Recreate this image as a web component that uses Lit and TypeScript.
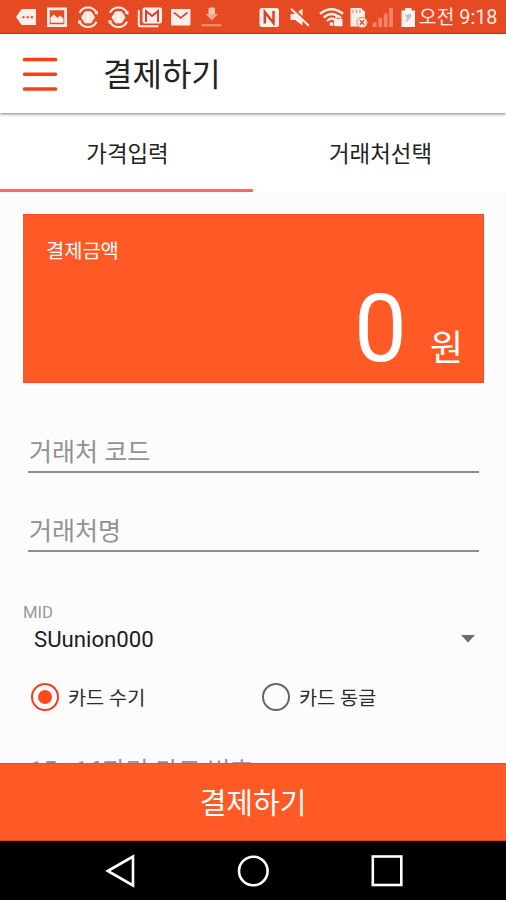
import { LitElement, html, css, svg } from "lit";
import { customElement, property, state } from "lit/decorators.js";
import { classMap } from "lit/directives/class-map.js";

@customElement("status-bar")
class StatusBar extends LitElement {
  static styles = css`
    :host {
      display: flex;
      height: 34px;
      box-sizing: border-box;
      background: #e64a22;
      border-bottom: 1px solid #dd2c12;
      color: #fdeee9;
    }
    .icons { display: block; flex: 0 0 419px; }
    .clock {
      display: flex;
      align-items: center;
      gap: 5px;
      height: 36px;
      font: 19px/36px Roboto, "Noto Sans CJK KR", sans-serif;
      white-space: nowrap;
    }
    .meridiem { font-size: 19.2px; line-height: 38px; }
    .time { font-size: 19.8px; }
  `;

  private sync(x: number) {
    return svg`
      <g transform="translate(${x} 17.3)" fill="none" stroke="#fdeee9">
        <path d="M-8.600 -4.500A9.700 9.700 0 0 1 8.600 -4.500" stroke-width="2"/>
        <path d="M8.600 4.500A9.700 9.700 0 0 1 -8.600 4.500" stroke-width="2"/>
        <path d="M10 -2.800L6 -3.600L9.800 -6.800ZM-10 2.800L-6 3.600L-9.800 6.800Z" fill="#fdeee9" stroke="none"/>
        <path d="M-3 -5.500H3L6.500 0L3 5.500H-3L-6.500 0Z" fill="#fdeee9" stroke="#fdeee9" stroke-width="1" stroke-linejoin="round"/>
        <path d="M-2.800 -4V4M2.800 -4V4" stroke="#f6cfc4" stroke-width=".7"/>
      </g>`;
  }

  render() {
    return html`
      <svg class="icons" width="419" height="33" viewBox="0 0 419 33">
        <path d="M16 17L21.5 9H36V25H21.5Z" fill="#fdeee9"/>
        <path d="M22.500 16.300h2v2h-2zM26.700 16.300h2v2h-2zM30.900 16.300h2v2h-2z" fill="#d93a2c"/>
        <path fill-rule="evenodd" d="M47 7.500H67V27H47ZM49.700 10.200V24.300H64.300V10.200Z" fill="#fdeee9"/>
        <path d="M50.5 22.8V17.5L54 14.5L57.5 18L60 15.5L63.500 18.500V22.800Z" fill="#fdeee9"/>
        ${this.sync(88)}${this.sync(118.5)}
        <rect x="142.500" y="7.500" width="19.500" height="16" rx="2" fill="#fdeee9"/>
        <path d="M138.800 10V24.800Q138.800 26.200 140.200 26.200H158.500" fill="none" stroke="#fdeee9" stroke-width="2"/>
        <path d="M146 22V11L152 16L158 11V22" fill="none" stroke="#d93a2c" stroke-width="1.900"/>
        <rect x="171" y="9" width="19.500" height="16.500" rx="1" fill="#fdeee9"/>
        <path d="M174 12.500L180.700 18L187.500 12.500" fill="none" stroke="#e0492f" stroke-width="1.700"/>
        <rect x="208.500" y="7.500" width="6.500" height="8" rx="1.500" fill="#fbc5b7"/>
        <path d="M205.500 14H218L211.800 20.500Z" fill="#f7a68f"/>
        <path d="M201.500 25.200H221.500" stroke="#f28e73" stroke-width="2.200"/>

        <rect x="259.500" y="8" width="19.500" height="19" rx="2.500" fill="#fdeee9"/>
        <path d="M264.800 23.500V12L273.500 23V11" fill="none" stroke="#dc4028" stroke-width="2.500"/>
        <path d="M290.500 14H295L302.500 8.500V25.500L295 20H290.500Z" fill="#fdeee9"/>
        <path d="M293 8.300L310 24.500" stroke="#e64a22" stroke-width="2.200"/>
        <path d="M291 8.800L308.800 25.800" stroke="#fdeee9" stroke-width="2"/>
        <g fill="none" stroke="#fdeee9" stroke-width="2.400">
          <path d="M320 13.800Q331.500 4.500 343 13.800"/>
          <path d="M323.700 17.500Q331.500 10.500 339.500 17.500"/>
          <path d="M327 21Q331.500 16.500 335 20"/>
        </g>
        <circle cx="331.500" cy="24" r="2" fill="#fdeee9"/>
        <rect x="334" y="19" width="8.500" height="7.200" rx="1" fill="#fdeee9"/>
        <path d="M336 19.500V18A2.300 2.300 0 0 1 340.600 18V19.500" fill="none" stroke="#fdeee9" stroke-width="1.500"/>
        <path d="M350.500 8H361L365 12V26.500H350.500Z" fill="#fdeee9"/>
        <path d="M353 9.500V13M356.500 9.500V13M360 9.500V13" stroke="#e99b88" stroke-width="1.300"/>
        <circle cx="362" cy="22.500" r="5.200" fill="#fdeee9" stroke="#e97f65" stroke-width="1"/>
        <path d="M359.800 20.300L364.200 24.700M364.200 20.300L359.800 24.700" stroke="#e64a22" stroke-width="1.300"/>
        <path d="M374.700 27V22.500M380.200 27V18M385.700 27V13.500M391 27V8" stroke="#f08468" stroke-width="3.800"/>
        <path d="M401.500 10.500H405V8H411.500V10.500H415V27H401.500Z" fill="#fdf3ef"/>
        <path d="M405 15L410 13.500L412 15.500L408.500 20.500L411 18L405 23L407 18.500Z" fill="#c9c5c2"/>
      </svg>
      <div class="clock"><span class="meridiem">오전</span><span class="time">9:18</span></div>
    `;
  }
}

@customElement("radio-option")
class RadioOption extends LitElement {
  @property() label = "";
  @property({ type: Boolean }) checked = false;

  static styles = css`
    :host {
      display: flex;
      align-items: center;
      gap: 9px;
      flex: 0 0 231px;
      height: 30px;
      font: 19.7px/30px Roboto, "Noto Sans CJK KR", sans-serif;
      color: #2b2b2b;
    }
    .ring {
      display: grid;
      place-items: center;
      width: 28px;
      height: 28px;
      box-sizing: border-box;
      border: 2.5px solid #666;
      border-radius: 50%;
    }
    .ring.on { border-color: #f43c1e; }
    .dot { width: 14px; height: 14px; border-radius: 50%; background: #ff4a1c; }
    .label { padding-top: 3px; }
  `;

  render() {
    return html`
      <span class=${classMap({ ring: true, on: this.checked })}>
        ${this.checked ? html`<span class="dot"></span>` : null}
      </span>
      <span class="label">${this.label}</span>
    `;
  }
}

@customElement("app-root")
class AppRoot extends LitElement {
  @state() private tab = 0;
  @state() private method = 0;

  static styles = css`
    :host {
      display: flex;
      flex-direction: column;
      width: 506px;
      height: 900px;
      overflow: hidden;
      background: #fcfcfc;
      font-family: Roboto, "Noto Sans CJK KR", sans-serif;
      color: #222;
    }
    status-bar, .header, .tabs, .submit, .nav { flex-shrink: 0; }
    .header {
      display: flex;
      align-items: center;
      gap: 46px;
      height: 79px;
      padding-left: 23px;
      background: #fff;
      box-shadow: 0 1px 3px rgba(0, 0, 0, 0.5);
      z-index: 1;
    }
    .menu { display: block; }
    .title { padding-top: 3px; font-size: 32px; line-height: 40px; color: #222; }
    .tabs { display: flex; height: 79px; background: #fff; }
    .tab {
      flex: 1;
      box-sizing: border-box;
      height: 79px;
      padding-left: 2px;
      border-bottom: 3.5px solid transparent;
      text-align: center;
      font-size: 22.4px;
      line-height: 82px;
      cursor: pointer;
    }
    .tab.active { border-bottom-color: #ff6a50; }
    .content { flex: 1; min-height: 0; overflow: hidden; padding: 22px 22px 0 23px; }
    .card {
      display: flex;
      flex-direction: column;
      justify-content: space-between;
      box-sizing: border-box;
      height: 169px;
      padding: 23px 20px 0 23px;
      border: 1px solid #f9491a;
      border-width: 1px 1px 1px 0;
      background: #ff5a25;
      color: #fff;
    }
    .caption { font-size: 19.8px; line-height: 28px; }
    .amount { display: flex; justify-content: flex-end; align-items: baseline; gap: 23px; height: 106px; line-height: 106px; }
    .value { font-size: 94px; }
    .unit { font-size: 36px; }
    .field {
      margin: 0 5px;
      height: 38px;
      padding-left: 1px;
      border-bottom: 2px solid #8d8b8c;
      font-size: 25px;
      line-height: 39px;
      color: #929292;
    }
    .code { margin-top: 50px; }
    .name { margin-top: 39px; }
    .mid { margin-top: 50px; font-size: 16.7px; line-height: 21px; height: 20px; color: #999; }
    .select {
      display: flex;
      justify-content: space-between;
      align-items: center;
      height: 34px;
      padding: 0 9px 0 11px;
      font-size: 22.2px;
      color: #1c1c1c;
    }
    .radios { display: flex; padding: 26px 0 0 8px; }
    .number { margin: 40px 5px 0; height: 38px; padding-left: 1px; font-size: 25.1px; line-height: 39px; color: #929292; white-space: nowrap; }
    .submit {
      height: 78px;
      box-sizing: border-box;
      border-top: 1px solid #f04d20;
      border-bottom: 1px solid #e04316;
      background: #ff5a25;
      color: #fff;
      text-align: center;
      font-size: 29px;
      line-height: 81px;
    }
    .nav { display: flex; align-items: center; justify-content: center; gap: 102px; height: 59px; padding-left: 1px; background: #000; }
  `;

  render() {
    const tabs = ["가격입력", "거래처선택"];
    const methods = ["카드 수기", "카드 동글"];
    return html`
      <status-bar></status-bar>
      <header class="header">
        <svg class="menu" width="34" height="36" viewBox="0 0 34 36">
          <path d="M1.500 3.500H32.500M1.500 18.200H32.500M1.500 33H32.500" stroke="#fb3f17" stroke-width="3.600" stroke-linecap="round"/>
        </svg>
        <span class="title">결제하기</span>
      </header>
      <nav class="tabs">
        ${tabs.map((t, i) => html`
          <div class=${classMap({ tab: true, active: i === this.tab })} @click=${() => (this.tab = i)}>${t}</div>`)}
      </nav>
      <main class="content">
        <section class="card">
          <div class="caption">결제금액</div>
          <div class="amount"><span class="value">0</span><span class="unit">원</span></div>
        </section>
        <div class="field code">거래처 코드</div>
        <div class="field name">거래처명</div>
        <div class="mid">MID</div>
        <div class="select">
          <span>SUunion000</span>
          <svg width="14" height="8" viewBox="0 0 14 8"><path d="M0 0H14L7 7.500Z" fill="#6b6b6b"/></svg>
        </div>
        <div class="radios">
          ${methods.map((m, i) => html`
            <radio-option .label=${m} .checked=${i === this.method} @click=${() => (this.method = i)}></radio-option>`)}
        </div>
        <div class="number">15~16자리 카드 번호</div>
      </main>
      <div class="submit">결제하기</div>
      <footer class="nav">
        <svg width="30" height="34" viewBox="0 0 30 34"><path d="M2.800 17L28 2.500V31.500Z" fill="none" stroke="#fff" stroke-width="2.600"/></svg>
        <svg width="32" height="34" viewBox="0 0 32 34"><circle cx="16.300" cy="17" r="14.300" fill="none" stroke="#fff" stroke-width="2.600"/></svg>
        <svg width="32" height="34" viewBox="0 0 32 34"><rect x="1.800" y="2.500" width="28.500" height="28.500" fill="none" stroke="#fff" stroke-width="2.600"/></svg>
      </footer>
    `;
  }
}
